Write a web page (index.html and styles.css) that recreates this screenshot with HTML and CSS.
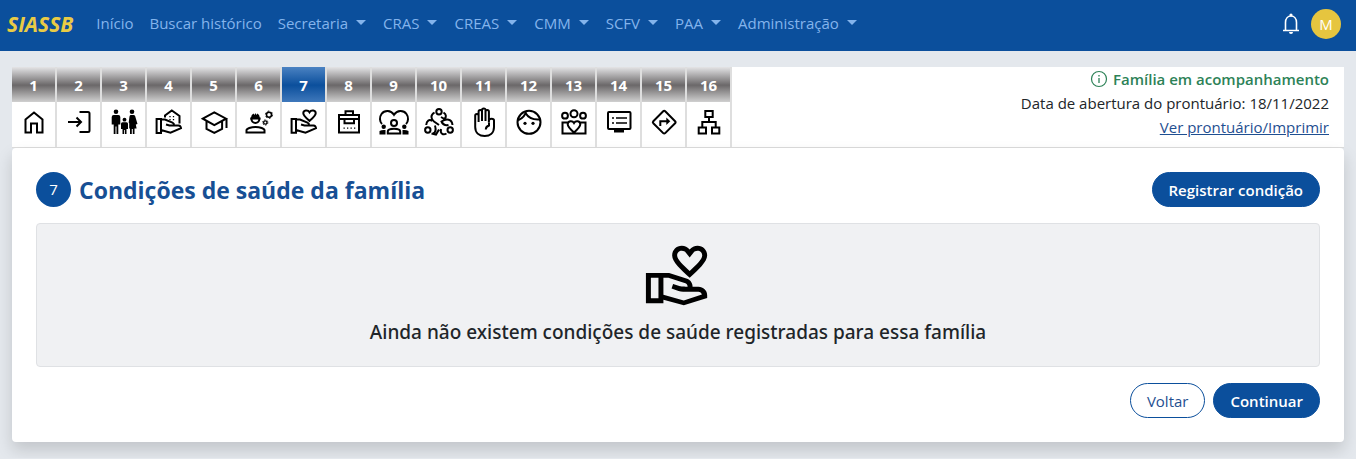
FILE: index.html
```html
<!DOCTYPE html>
<html lang="pt-BR">
<head>
<meta charset="utf-8">
<meta name="viewport" content="width=device-width, initial-scale=1">
<title>SIASSB</title>
<link rel="stylesheet" href="styles.css">
</head>
<body>
<header class="navbar">
  <a class="brand" href="#">SIASSB</a>
  <nav class="menu">
    <a href="#">Início</a>
    <a href="#">Buscar histórico</a>
    <a class="drop" href="#">Secretaria</a>
    <a class="drop" href="#">CRAS</a>
    <a class="drop" href="#">CREAS</a>
    <a class="drop" href="#">CMM</a>
    <a class="drop" href="#">SCFV</a>
    <a class="drop" href="#">PAA</a>
    <a class="drop" href="#">Administração</a>
  </nav>
  <button class="bell" type="button" aria-label="Notificações">
    <svg width="20" height="24" viewBox="0 0 20 24"><path d="M2 18.500h16M4.500 18V10.500C4.500 6.500 7 4 10 4s5.500 2.500 5.500 6.500V18" fill="none" stroke="#fff" stroke-width="1.600"/><circle cx="10" cy="3" r="1.600" fill="#fff"/><path d="M8 20h4a2 2 0 0 1-4 0z" fill="#fff"/></svg>
  </button>
  <button class="avatar" type="button">M</button>
</header>

<main class="page">
  <div class="top">
    <nav class="steps">
      <a href="#"><b>1</b><span><svg viewBox="0 0 31 31"><path d="M7.500 11.500 16 4.500l8.500 7v13H19v-9h-6v9H7.500z"/></svg></span></a>
      <a href="#"><b>2</b><span><svg viewBox="0 0 31 31"><path d="M5 14h13M13.500 9.500 18 14l-4.500 4.500M16.500 4H25q1.500 0 1.500 1.500v17q0 1.500-1.500 1.500h-8.500"/></svg></span></a>
      <a href="#"><b>3</b><span><svg class="solid" viewBox="0 0 31 31"><circle cx="8" cy="3.800" r="2.300"/><path d="M5.700 7h4.600q2 0 2 2v7.500h-2V26H8.500v-7.500h-1V26H5.700v-9.500h-2V9q0-2 2-2z"/><circle cx="16.500" cy="11.700" r="1.900"/><path d="M14.500 14.300h4q1.500 0 1.500 1.500V21h-1.500v5h-1.600v-4h-.8v4h-1.600v-5H13v-5.200q0-1.500 1.500-1.500z"/><circle cx="24" cy="3.800" r="2.300"/><path d="M22.500 7h3q1.300 0 1.700 1.300L29.500 16l-1.700.5.800 4H26.500V26h-1.700v-5h-1v5H22v-5.500h-.8v-5.300l-.5-.7.800-6Q21.800 7 22.500 7z"/></svg></span></a>
      <a href="#"><b>4</b><span><svg viewBox="0 0 31 31"><path d="M3.600 11H8v14H3.600zM8 11.500h4l7.500 3.200q1.800.8 1.500 2.800h-4.500l-3.500-1M20.500 17.500h5q2.200.3 2.500 2.700L17.500 24.700 8 22M12 9.500V7.500l6.800-5L26.500 8v7.500"/><path d="M17 8v1.300M20.500 8v1.300M17 11v1.300M20.500 11v1.300" stroke-width="1.300"/></svg></span></a>
      <a href="#"><b>5</b><span><svg viewBox="0 0 31 31"><path d="M4.800 10.700 16.300 4.300l11.800 6.400-11.800 6.500zM8.500 13.500V21l7.800 4 7.800-4v-7.500M28.500 10.700V20"/></svg></span></a>
      <a href="#"><b>6</b><span><svg viewBox="0 0 31 31"><path d="M3.500 24.500v-2.200c0-1.800 4.500-3.300 9-3.300s9 1.500 9 3.300v2.200zM8.500 11a3.900 3.900 0 0 0 7.800 0"/><path d="M7.200 11.500v-2h.8q.3-2.800 2.500-4l1 1.500.9-2 .9 2 1-1.500q2.300 1.200 2.500 4h.8v2z" fill="#000" stroke="none"/><circle cx="26" cy="6.700" r="2.500" stroke-width="1.500"/><circle cx="26" cy="6.700" r="3.600" stroke-width="1" stroke-dasharray="1.800 1.970"/><circle cx="22.300" cy="14.500" r="1.700" stroke-width="1.300"/><circle cx="22.300" cy="14.500" r="2.600" stroke-width="1" stroke-dasharray="1.300 1.420"/></svg></span></a>
      <a class="active" href="#" aria-current="step"><b>7</b><span><svg viewBox="0 0 31 31"><path d="M3.600 11H8v13.700H3.600zM8 11.500h4l7.500 3.200q1.800.8 1.500 2.800h-4.500l-3.500-1M20.500 17.500h5q2.200.3 2.500 2.700L17.500 24.700 8 22M21.500 13c-3.500-3.200-6.200-5.500-6.200-7.700 0-3.200 4.400-4 6.200-1 1.800-3 6.200-2.200 6.200 1 0 2.200-2.700 4.500-6.200 7.700z"/></svg></span></a>
      <a href="#"><b>8</b><span><svg viewBox="0 0 31 31"><path d="M6 7h20v17.500H6zM6 11h20M12.500 7V3.200h7.500V7M11.500 11.500v3.800h9.500v-3.800"/><path d="M10.500 20.200h1.300M14 20.200h1.300M17.500 20.200h1.300M21 20.200h1.300" stroke-width="1.300"/></svg></span></a>
      <a href="#"><b>9</b><span><svg viewBox="0 0 31 31"><path d="M4 16C1.500 13.500 1.300 9 3.500 6c3-4 9.500-4 12.500.8C19 2 25.500 2 28.500 6c2.200 3 2 7.500-.5 10"/><circle cx="16" cy="15" r="3"/><path d="M9.800 25.500v-2c0-1.600 3-2.700 6.200-2.700s6.200 1.100 6.200 2.700v2z"/><g fill="#000" stroke="none"><circle cx="5.700" cy="18.800" r="2.200"/><circle cx="26.300" cy="18.800" r="2.200"/><path d="M1.500 26.500V23Q4 21.500 7.500 22v4.500zM24.500 26.500V22q3.500-.5 6 1v3.500z"/></g></svg></span></a>
      <a href="#"><b>10</b><span><svg viewBox="0 0 31 31"><circle cx="16" cy="3.700" r="2.700"/><circle cx="4.800" cy="22" r="2.700"/><circle cx="27.200" cy="22" r="2.700"/><path d="M11.500 4.500C7 7 8 11 11 13.500l5 3.500M20.500 4.500c3 2 3 4.500 1 6.500l-3.500-2M3.200 17c.5-4.500 3-6 6-4M10 25.500c3.500-1 3-4.500 2-8M8.500 25.500l4.500 1 3-5M29.500 17c-.5-6-6-7-11-3.500 1.500 3.500 4.500 4 7 3.500M23.500 25.500c-3.500 2-6.500 0-5.500-4.500"/></svg></span></a>
      <a href="#"><b>11</b><span><svg viewBox="0 0 31 31"><path d="M7.200 19V7.500q0-1.500 1.700-1.500t1.700 1.500V14M10.600 14V3.500Q10.600 2 12.300 2T14 3.500V13M14 13V2Q14 .5 15.800.5T17.500 2v11M17.500 13V3.500Q17.500 2 19.200 2t1.700 1.500v11.300M21 12.500q0-1.800 2.500-1.800T26 12.500V19c0 6-4 9-9.300 9S7.200 25 7.200 19M21 15v2.500q-3.200 1-3.200 4"/></svg></span></a>
      <a href="#"><b>12</b><span><svg viewBox="0 0 31 31"><circle cx="16" cy="14.300" r="11.500"/><path d="M5.500 12c4-1.500 6.500-4.500 7.500-8.500M12.500 5c3 5 7.500 7 14 6.500"/><g fill="#000" stroke="none"><circle cx="12" cy="15.300" r="1.600"/><circle cx="20" cy="15.300" r="1.600"/></g></svg></span></a>
      <a href="#"><b>13</b><span><svg viewBox="0 0 31 31"><circle cx="7" cy="7.700" r="2.900"/><circle cx="16" cy="5.700" r="3.500"/><circle cx="25" cy="7.700" r="2.900"/><path d="M10 14.500H4.500v11h23v-11H22M16 24.500c-3.500-3-6.300-5.700-6.300-8.200 0-3.600 4.600-4.200 6.300-1.300 1.700-2.900 6.300-2.300 6.300 1.300 0 2.500-2.800 5.200-6.300 8.200z"/></svg></span></a>
      <a href="#"><b>14</b><span><svg viewBox="0 0 31 31"><rect x="5" y="4" width="22.500" height="17" rx="1"/><path d="M9 10h2M13 10h11M9 15h2M13 15h11" stroke-width="1.600"/><path d="M11 21h10v3.500H11z" fill="#000" stroke="none"/></svg></span></a>
      <a href="#"><b>15</b><span><svg viewBox="0 0 31 31"><path d="M15.200 3.300q1-1 2 0l9.900 9.900q1 1 0 2l-9.900 9.900q-1 1-2 0l-9.900-9.900q-1-1 0-2z"/><path d="M12.300 18v-4.700H19"/><path d="M18.300 9.500 22.300 13.300l-4 3.800z" fill="#000" stroke="none"/></svg></span></a>
      <a href="#"><b>16</b><span><svg viewBox="0 0 31 31"><path d="M12.300 3h7.400v6h-7.400zM5.700 19.500H13v6H5.700zM19 19.500h7.300v6H19zM16 9v5M9.300 19.500V14h13.400v5.500"/></svg></span></a>
    </nav>
    <div class="status">
      <strong><svg width="18" height="18" viewBox="0 0 18 18"><circle cx="9" cy="9" r="7.500" fill="none" stroke="currentColor" stroke-width="1.200"/><path d="M9 8v5M9 5v1.500" stroke="currentColor" stroke-width="1.300"/></svg>Família em acompanhamento</strong>
      <span>Data de abertura do prontuário: 18/11/2022</span>
      <a href="#">Ver prontuário/Imprimir</a>
    </div>
  </div>

  <section class="card">
    <div class="heading">
      <span class="number">7</span>
      <h1>Condições de saúde da família</h1>
      <button class="btn" type="button">Registrar condição</button>
    </div>
    <div class="empty">
      <svg viewBox="0 0 24 24" aria-hidden="true">
        <path d="M16 12.900c3.090-2.810 6-5.440 6-7.700C22 3.450 20.550 2 18.700 2c-1.040 0-2.050.49-2.700 1.250C15.340 2.490 14.340 2 13.300 2 11.450 2 10 3.450 10 5.300c0 2.260 2.910 4.790 6 7.600zm-2.700-9.200c.6 0 1.100.25 1.400.65L16 6l1.300-1.650c.3-.4.800-.65 1.400-.65.9 0 1.600.7 1.600 1.600 0 1.300-2.100 3.300-4.300 5.300-2.200-2-4.300-4-4.300-5.300 0-.9.700-1.600 1.600-1.600z"/>
        <path fill-rule="evenodd" d="M19 16h-2c0-1.200-.75-2.280-1.870-2.700L8.970 11.300H1v10.400h6v-1.240l7 1.940 8-2.500v-1c0-1.660-1.340-2.900-3-2.900zM2.700 20v-7.100h2.600V20H2.700zm11.270.71L7 18.800v-5.900h1.710l5.820 1.970c.45.17.77.66.77 1.130 0 0-2.290-.05-2.600-.15l-2.380-.79-.53 1.600 2.380.79c.51.17 1.040.26 1.580.26H19c.59 0 1.040.43 1.200.96l-6.230 2.040z"/>
      </svg>
      <p>Ainda não existem condições de saúde registradas para essa família</p>
    </div>
    <div class="actions">
      <button class="btn outline" type="button">Voltar</button>
      <button class="btn" type="button">Continuar</button>
    </div>
  </section>
</main>
</body>
</html>
```

FILE: styles.css
```css
* { box-sizing: border-box; }
body {
  margin: 0;
  background: #e4e8ed;
  color: #212529;
  font: 15px/24px "Segoe UI", "Open Sans", "Noto Sans", sans-serif;
}
a { color: inherit; text-decoration: none; }
button { font: inherit; cursor: pointer; }

.navbar {
  display: flex;
  align-items: center;
  min-height: 51px;
  padding: 0 15px 4px 7px;
  background: #0b4f9c;
}
.brand { color: #e9cb45; font-size: 21px; font-weight: 700; font-style: italic; margin-right: 15px; }
.menu { display: flex; flex: 1; padding-bottom: 2px; }
.menu a { padding: 0 8px; color: #84b4ec; white-space: nowrap; }
.menu .drop { padding-right: 9px; }
.drop::after {
  content: "";
  display: inline-block;
  margin-left: 8px;
  vertical-align: 4px;
  border: 5px solid transparent;
  border-top-color: currentColor;
  border-bottom: 0;
}
.bell { display: flex; padding: 0; margin-right: 10px; border: 0; background: none; }
.avatar {
  width: 30px;
  height: 30px;
  padding: 0;
  border: 0;
  border-radius: 50%;
  background: #e6c53f;
  color: #fff;
}

.page { padding: 16px 12px; }
.top {
  display: flex;
  justify-content: space-between;
  background: #fff;
  border-bottom: 1px solid #dcdcdc;
}
.steps { display: flex; }
.steps a {
  display: flex;
  flex-direction: column;
  width: 45px;
  border-right: 2px solid #dedede;
  color: #000;
}
.steps b {
  height: 35px;
  line-height: 36px;
  text-align: center;
  color: #fff;
  background: linear-gradient(#e4e4e6, #6b6869 52%, #d0d0d0);
}
.steps .active b { background: linear-gradient(#4b82c2, #0b4f9c 52%, #3f78bb); }
.steps span { display: flex; justify-content: center; flex: 1; padding-top: 6px; }
.steps svg {
  width: 31px;
  height: 31px;
  overflow: visible;
  fill: none;
  stroke: #000;
  stroke-width: 2;
}
.steps .solid { fill: #000; stroke: none; }

.status {
  display: flex;
  flex-direction: column;
  align-items: flex-end;
  padding: 0 15px 8px;
}
.status strong { display: flex; align-items: center; gap: 5px; color: #2d8257; font-weight: 600; }
.status a { color: #1f4f91; text-decoration: underline; }

.card {
  padding: 24px;
  background: #fff;
  border-radius: 4px;
  box-shadow: 0 8px 16px rgba(0, 0, 0, 0.15);
}
.heading { display: flex; align-items: center; gap: 8px; }
.number {
  width: 35px;
  height: 35px;
  border-radius: 50%;
  background: #0b4f9c;
  color: #fff;
  line-height: 35px;
  text-align: center;
}
h1 { flex: 1; margin: 0; color: #174f94; font-size: 23px; line-height: 32px; font-weight: 700; }
.btn {
  height: 35px;
  padding: 0 16px;
  border: 1px solid #0b4f9c;
  border-radius: 18px;
  background: #0b4f9c;
  color: #fff;
  font-weight: 600;
}
.outline { background: #fff; color: #1f4f91; font-weight: 500; }
.empty {
  display: flex;
  flex-direction: column;
  align-items: center;
  gap: 8px;
  margin: 16px 0;
  padding: 16px 16px 20px;
  border: 1px solid #dfe1e4;
  border-radius: 4px;
  background: #f0f1f3;
}
.empty svg { width: 70px; height: 70px; }
.empty p { margin: 0; font-family: "Segoe UI", "Noto Sans", sans-serif; font-size: 19px; line-height: 28px; font-weight: 500; }
.actions { display: flex; justify-content: flex-end; gap: 8px; }
```
